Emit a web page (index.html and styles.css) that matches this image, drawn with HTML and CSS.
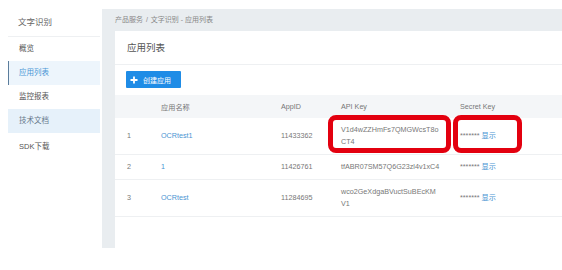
FILE: index.html
```html
<!DOCTYPE html>
<html>
  <head>
  <meta charset="utf-8">
  <title>应用列表</title>
  <link rel="stylesheet" href="styles.css">
  </head>
  <body>
    <div class="page">

      <aside class="sidebar">
        <div class="side-title">文字识别</div>
        <ul class="side-menu">
          <li>概览</li>
          <li class="active">应用列表</li>
          <li>监控报表</li>
          <li class="hover">技术文档</li>
          <li>SDK下载</li>
        </ul>
      </aside>

      <main class="main">
        <div class="crumb">产品服务 <span class="sep">/</span> 文字识别 - 应用列表</div>

        <section class="card">
          <div class="card-head">应用列表</div>
          <div class="toolbar">
            <button class="btn-create">
              <svg viewBox="0 0 8 8" width="8" height="8"><path d="M4 0.5V7.5M0.5 4H7.5" stroke="#fff" stroke-width="1.8"/></svg>
              <span>创建应用</span>
            </button>
          </div>

          <table class="app-table">
            <colgroup>
              <col class="c-no"><col class="c-name"><col class="c-id"><col class="c-key"><col>
            </colgroup>
            <thead>
              <tr><th></th><th>应用名称</th><th>AppID</th><th>API Key</th><th>Secret Key</th></tr>
            </thead>
            <tbody>
              <tr>
                <td>1</td><td><a>OCRtest1</a></td><td>11433362</td>
                <td class="key">V1d4wZZHmFs7QMGWcsT8oCT4</td>
                <td>******* <a>显示</a></td>
              </tr>
              <tr>
                <td>2</td><td><a>1</a></td><td>11426761</td>
                <td class="key">tfABR07SM57Q6G23zl4v1xC4</td>
                <td>******* <a>显示</a></td>
              </tr>
              <tr>
                <td>3</td><td><a>OCRtest</a></td><td>11284695</td>
                <td class="key">wco2GeXdgaBVuctSuBEcKMV1</td>
                <td>******* <a>显示</a></td>
              </tr>
            </tbody>
          </table>
        </section>
      </main>

      <div class="mark mark-key"></div>
      <div class="mark mark-secret"></div>
    </div>
  </body>
</html>
```

FILE: styles.css
```css
/* Page frame */
body
{
  margin: 0;
  background: #fff;
  font-family: "Liberation Sans", "Noto Sans CJK SC", sans-serif;
  color: #666;
}

.page
{
  position: relative;
  display: flex;
  width: 562px;
  height: 270px;
}

/* Left side menu */
.sidebar
{
  width: 92px;
  padding: 0 2px 0 8px;
  flex: none;
}
.side-title
{
  box-sizing: border-box;
  height: 37px;
  padding: 17px 0 0 10px;
  line-height: 10px;
  font-size: 8.5px;
  color: #666;
  border-bottom: 1px solid #eef0f2;
}
ul.side-menu
{
  list-style-type: none;
  margin: 0;
  padding: 0;
}
.side-menu li
{
  height: 24px;
  line-height: 24px;
  padding-left: 11px;
  font-size: 7.5px;
  color: #555;
}
.side-menu li:last-child
{
  line-height: 27px;
}
.side-menu li.active
{
  background-color: #edf5fc;
  border-left: 1px solid #5b7d9c;
  padding-left: 10px;
  color: #4a95d6;
}
.side-menu li.hover
{
  background-color: #e6f1fa;
  color: #66788a;
}

/* Main area */
.main
{
  flex: 1;
  display: flex;
  flex-direction: column;
  margin-top: 9px;
  height: 239px;
  padding-left: 13px;
  background-color: #e9edf0;
}
.crumb
{
  height: 22px;
  line-height: 22px;
  font-size: 7px;
  color: #888;
}
.crumb .sep
{
  padding: 0 1px;
}
.card
{
  flex: 1;
  background-color: #fff;
}
.card-head
{
  height: 33px;
  line-height: 33px;
  padding-left: 12px;
  font-size: 9.5px;
  color: #555;
  border-bottom: 1px solid #eef0f2;
}
.toolbar
{
  padding: 6px 11px 7px;
}
button.btn-create
{
  display: flex;
  align-items: center;
  gap: 5px;
  width: 55px;
  height: 17px;
  padding: 0 0 0 4px;
  border: none;
  border-radius: 1px;
  background-color: #1f8ce6;
  color: #fff;
  font-family: inherit;
  font-size: 7px;
}

/* Application table */
table.app-table
{
  width: 100%;
  border-collapse: collapse;
  font-size: 7.2px;
}
col.c-no   { width: 34px; }
col.c-name { width: 120px; }
col.c-id   { width: 60px; }
col.c-key  { width: 119px; }

.app-table th
{
  height: 23px;
  padding: 0 12px;
  background-color: #f4f6f8;
  font-weight: normal;
  text-align: left;
  color: #777;
}
.app-table td
{
  padding: 6px 12px;
  line-height: 12px;
  border-bottom: 1px solid #eef0f2;
  color: #777;
}
.app-table td.key
{
  padding-right: 8px;
  word-break: break-all;
}
.app-table a
{
  color: #4a94d2;
}

/* Red highlight marks drawn over the screenshot */
.mark
{
  position: absolute;
  box-sizing: border-box;
  border: 5px solid #e3000f;
  border-radius: 8px;
}
.mark-key
{
  left: 328px;
  top: 115px;
  width: 123px;
  height: 38px;
}
.mark-secret
{
  left: 453px;
  top: 115px;
  width: 69px;
  height: 38px;
}
```
